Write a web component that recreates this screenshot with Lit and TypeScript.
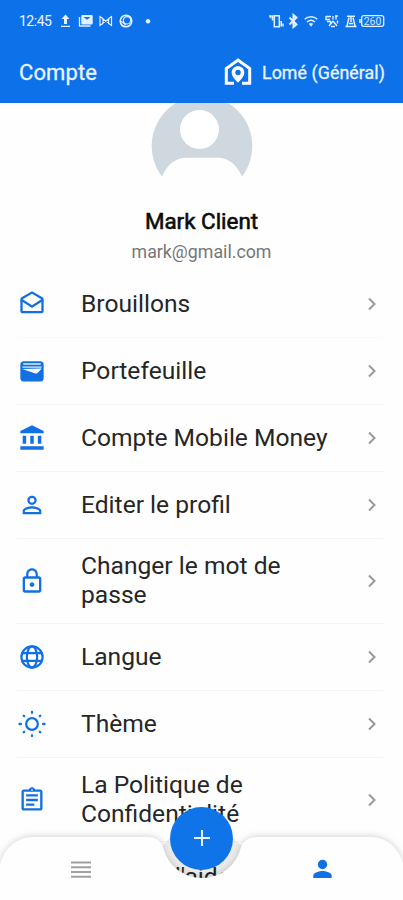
import { LitElement, html, css, svg } from "lit";
import { customElement } from "lit/decorators.js";

const icons: Record<string, unknown> = {
  drafts: svg`<path d="M21.99 8c0-.72-.37-1.35-.94-1.7L12 1 2.95 6.3C2.38 6.65 2 7.28 2 8v10c0 1.1.9 2 2 2h16c1.1 0 2-.9 2-2l-.01-10zM20 8v.01L12 13 4 8l8-4.68L20 8zM4 18v-7.66l8 5.02 8-5.02V18H4z"/>`,
  wallet: svg`<path d="M5 3.600h14a3 3 0 0 1 3 3V18a3 3 0 0 1-3 3H5a3 3 0 0 1-3-3V6.600a3 3 0 0 1 3-3z"/><path d="M4.500 6h15M3.800 8.600h16.400" fill="none" stroke="#dfebfb" stroke-width="1.100"/><path d="M3.600 10.300l16.800-.5-3.700 3.900c-.5.500-1 .6-1.700.4z" fill="#fff"/>`,
  bank: svg`<path d="M4 10v7h3v-7H4zm6.500 0v7h3v-7h-3zM2 22h20v-3H2v3zm15-12v7h3v-7h-3zM12 1L2 6v2h20V6L12 1z"/>`,
  person: svg`<path d="M12 5.900a2.100 2.100 0 1 1 0 4.200 2.100 2.100 0 0 1 0-4.200m0 9c2.970 0 6.100 1.460 6.100 2.100v1.100H5.900V17c0-.64 3.130-2.100 6.100-2.100M12 4C9.790 4 8 5.790 8 8s1.790 4 4 4 4-1.790 4-4-1.790-4-4-4zm0 9c-2.670 0-8 1.340-8 4v3h16v-3c0-2.660-5.330-4-8-4z"/>`,
  lock: svg`<path d="M12 17c1.100 0 2-.9 2-2s-.9-2-2-2-2 .9-2 2 .9 2 2 2zm6-9h-1V6c0-2.760-2.240-5-5-5S7 3.240 7 6v2H6c-1.100 0-2 .9-2 2v10c0 1.100.9 2 2 2h12c1.100 0 2-.9 2-2V10c0-1.100-.9-2-2-2zM8.900 6c0-1.710 1.390-3.100 3.100-3.100s3.100 1.390 3.100 3.100v2H8.900V6zM18 20H6V10h12v10z"/>`,
  globe: svg`<g fill="none" stroke="currentColor" stroke-width="1.900"><circle cx="12" cy="12" r="9.100"/><ellipse cx="12" cy="12" rx="4.400" ry="9.100"/><path d="M3.500 8.600h17M3.500 15.400h17"/></g>`,
  sun: svg`<circle cx="12" cy="12" r="5" fill="none" stroke="currentColor" stroke-width="1.900"/><g fill="none" stroke="currentColor" stroke-width="2" stroke-linecap="round"><path d="M12 1.700v.6M12 21.700v.6M1.300 12h1.200M21.500 12h1.200M4.900 4.900l.4.4M18.700 18.700l.4.4M4.900 19.100l.4-.4M18.700 5.300l.4-.4"/></g>`,
  clipboard: svg`<path d="M7 15h7v2H7zm0-4h10v2H7zm0-4h10v2H7zm12-4h-4.180C14.400 1.840 13.300 1 12 1c-1.300 0-2.400.84-2.820 2H5c-1.100 0-2 .9-2 2v14c0 1.100.9 2 2 2h14c1.100 0 2-.9 2-2V5c0-1.100-.9-2-2-2zm-7-.25c.41 0 .75.34.75.75s-.34.75-.75.75-.75-.34-.75-.75.34-.75.75-.75zM19 19H5V5h14v14z"/>`,
  help: svg`<circle cx="12" cy="12" r="9" fill="none" stroke="currentColor" stroke-width="2"/>`,
};

const rows = [
  { icon: "drafts", label: "Brouillons" },
  { icon: "wallet", label: "Portefeuille" },
  { icon: "bank", label: "Compte Mobile Money" },
  { icon: "person", label: "Editer le profil" },
  { icon: "lock", label: "Changer le mot de passe", tall: true },
  { icon: "globe", label: "Langue" },
  { icon: "sun", label: "Thème" },
  { icon: "clipboard", label: "La Politique de Confidentialité", tall: true },
  { icon: "help", label: "Obtenir d'aide" },
];

@customElement("menu-row")
export class MenuRow extends LitElement {
  static properties = { icon: {}, label: {} };
  declare icon: string;
  declare label: string;

  static styles = css`
    :host {
      display: flex;
      align-items: center;
      box-sizing: border-box;
      height: 67.2px;
      flex: none;
      margin: 0 20px 0 17px;
      border-bottom: 1px solid #f5f5f5;
    }
    :host(:first-of-type) { border-bottom-color: #fafafa; }
    :host(:last-of-type) { padding-top: 2px; }
    :host([tall]) { height: 84.400px; }
    .icon { width: 28px; height: 28px; flex: none; margin-left: 1px; color: #1270e2; fill: currentColor; }
    .label { flex: none; width: 255px; margin-left: 35px; padding-bottom: 1px; font-size: 24.600px; line-height: 29px; color: #262626; }
    .chevron { width: 8px; height: 14px; margin-left: auto; margin-right: 7px; }
  `;

  render() {
    return html`
      <svg class="icon" viewBox="0 0 24 24">${icons[this.icon]}</svg>
      <span class="label">${this.label}</span>
      <svg class="chevron" viewBox="0 0 8 14">
        <path d="M1 1.500 6.500 7 1 12.500" fill="none" stroke="#999" stroke-width="2" />
      </svg>
    `;
  }
}

@customElement("app-root")
export class AppRoot extends LitElement {
  static styles = css`
    :host {
      display: flex;
      flex-direction: column;
      position: relative;
      height: 900px;
      overflow: hidden;
      background: #fefefe;
      font-family: Roboto, sans-serif;
    }
    .top { flex: none; height: 102.500px; background: #0d72ea; color: #eaf4ff; display: flex; flex-direction: column; }
    .status { height: 41px; display: flex; align-items: center; padding: 1px 17px 0 19px; box-sizing: border-box; }
    .time { font-size: 14px; width: 40px; letter-spacing: -0.5px; }
    .status svg { display: block; height: 16px; }
    .grow { flex: 1; }
    .bar { height: 61px; display: flex; align-items: center; padding: 1px 18px 0 19px; }
    .title { font-size: 22px; flex: 1; letter-spacing: 0.1px; -webkit-text-stroke: 0.3px currentColor; }
    .house { width: 30px; height: 30px; margin-right: 9px; }
    .place { font-size: 17.800px; letter-spacing: 0.080px; -webkit-text-stroke: 0.3px currentColor; }
    .content { flex: none; height: 797.500px; overflow: hidden; display: flex; flex-direction: column; }
    .profile { flex: none; height: 168px; display: flex; flex-direction: column; align-items: center; }
    .avatar { width: 102px; height: 76px; flex: none; }
    .name { font-size: 22.400px; line-height: 28px; color: #0c0c0c; margin-top: 28px; -webkit-text-stroke: 0.6px currentColor; }
    .mail { font-size: 17.800px; line-height: 22px; color: #777; margin-top: 6.500px; }
    .nav { position: absolute; left: 0; bottom: 0; width: 403px; height: 100px; }
    .shape { display: block; width: 403px; height: 100px; overflow: visible; }
    .edge { filter: drop-shadow(0 -1px 3px rgba(0, 0, 0, 0.12)) drop-shadow(0 0 5px rgba(0, 0, 0, 0.05)); }
    .fab {
      position: absolute; left: 170px; top: 6.500px; width: 63px; height: 63px;
      border-radius: 50%; background: #1074e9; display: grid; place-items: center;
    }
    .fab svg { width: 16px; height: 16px; }
  `;

  private statusLeft() {
    return html`<svg width="95" height="16" viewBox="0 0 95 16" fill="#e2f0ff">
      <path d="M6.500 1.500 10.500 6H8v5H5V6H2.500zM2 12.700h9v1.300H2z" />
      <path fill-rule="evenodd" d="M23.500 2h9a1.200 1.200 0 0 1 1.200 1.200v7.100a1.200 1.200 0 0 1-1.200 1.200h-9a1.200 1.200 0 0 1-1.200-1.200V3.200a1.200 1.200 0 0 1 1.200-1.200zM24.500 4 28 6.700 31.500 4z" />
      <path d="M20.500 4v9h11" fill="none" stroke="#e2f0ff" stroke-width="1.300" />
      <path d="M41 3.500v9l3-2V5.500zM52.500 3.500v9l-3-2V5.500zM43 5.500l7.500 5M50.500 5.500l-7.500 5" fill="none" stroke="#e2f0ff" stroke-width="1.200" />
      <circle cx="67" cy="8" r="5.800" fill="none" stroke="#e2f0ff" stroke-width="1.500" />
      <circle cx="68" cy="7.300" r="3.700" fill="none" stroke="#e2f0ff" stroke-width="1.200" />
      <path d="M61 7.500 67 12M62 12.500l4 1" stroke="#e2f0ff" stroke-width="1.100" />
      <circle cx="89" cy="8.200" r="2.200" />
    </svg>`;
  }

  private statusRight() {
    return html`<svg width="120" height="16" viewBox="0 0 120 16" fill="none" stroke="#e2f0ff" stroke-width="1.500">
      <path d="M8.300 2.700h5v11h-5zM6.500 2.500v5M4.500 2.200v3M3 3h4M15.200 8v5.500M17 10.500v3" />
      <path d="m23.500 4.500 7 7-3 2.500V2l3 2.500-7 7" stroke-width="2" />
      <path d="M38.700 6.200c3.700-3.300 8.900-3.300 12.600 0M41 9c2.500-2.200 5.500-2.200 8 0" /><path d="m42.800 10.700 2.200 3 2.200-3q-2.200-1.600-4.400 0z" fill="#e2f0ff" stroke="none" />
      <path d="M60 3.500h5M60 3v3.500h4M67 3v3.500M70 3v3.500M72 3h-3M61 8.500h3.500v3M67 8l-4 5M67 8l4 5M65 13.500h4M71.500 7.500v3" stroke-width="1.400" />
      <path d="M79.500 13.500h11M81 13l2-8.500M89 13l-2-8.500M81 3.200h8M83 10.500h4M85 4v5" />
      <rect x="95.700" y="2.700" width="22" height="10.600" rx="2" stroke-width="1.300" />
      <path d="M94 6v4" />
      <text x="106.500" y="11.600" text-anchor="middle" font-family="Roboto" font-size="10.500" fill="#cfe4ff" stroke="none">260</text>
    </svg>`;
  }

  render() {
    return html`
      <header class="top">
        <div class="status">
          <span class="time">12:45</span>
          ${this.statusLeft()}
          <span class="grow"></span>
          ${this.statusRight()}
        </div>
        <div class="bar">
          <span class="title">Compte</span>
          <svg class="house" viewBox="0 0 30 30">
            <path d="M11 26.200H3.300V11.500L15 3l11.700 8.500v14.700H19" fill="none" stroke="#fff" stroke-width="3" />
            <path fill-rule="evenodd" fill="#fff" d="M15 9.300c3.700 0 6.300 2.700 6.300 6.200 0 4.200-3.600 7.300-6.300 10.200-2.700-2.900-6.300-6-6.300-10.200 0-3.500 2.600-6.200 6.300-6.200zm0 3.500a2.700 2.700 0 1 0 0 5.400 2.700 2.700 0 0 0 0-5.400z" />
          </svg>
          <span class="place">Lomé (Général)</span>
        </div>
      </header>
      <main class="content">
        <section class="profile">
          <svg class="avatar" viewBox="0 0 102 76">
            <path d="M11 73.500A50.300 50.300 0 1 1 91 73.500C86 62 78 54.700 66 54.700H36C24 54.700 16 62 11 73.500z" fill="#cfd8df" />
            <circle cx="48.500" cy="26.500" r="19.500" fill="#fff" />
          </svg>
          <div class="name">Mark Client</div>
          <div class="mail">mark@gmail.com</div>
        </section>
        ${rows.map((r) => html`<menu-row .icon=${r.icon} .label=${r.label} ?tall=${r.tall}></menu-row>`)}
      </main>
      <nav class="nav">
        <svg class="shape" viewBox="0 0 403 100">
          <path d="M162 46A40 40 0 0 0 242 46L233 38A32 32 0 0 1 170 38z" fill="#000" fill-opacity="0.07" />
          <path class="edge" fill="#fefefe" d="M-1 101V72C1 50 15 37 34 37H146C156 37 160 40 163 47A40 40 0 0 0 241 47C244 40 249 37 259 37H370C388 37 401 50 404 68V101z" />
          <path d="M71 62.500h20M71 67.200h20M71 72h20M71 76.700h20" stroke="#a0a0a0" stroke-width="2" />
          <circle cx="322.500" cy="64.500" r="4.700" fill="#1270e2" />
          <path d="M313.300 78v-2.300c0-3.200 6.100-4.700 9.200-4.700s9.200 1.500 9.200 4.700V78z" fill="#1270e2" />
        </svg>
        <div class="fab">
          <svg viewBox="0 0 16 16"><path d="M8 0v16M0 8h16" stroke="#e8f3ff" stroke-width="2" /></svg>
        </div>
      </nav>
    `;
  }
}
